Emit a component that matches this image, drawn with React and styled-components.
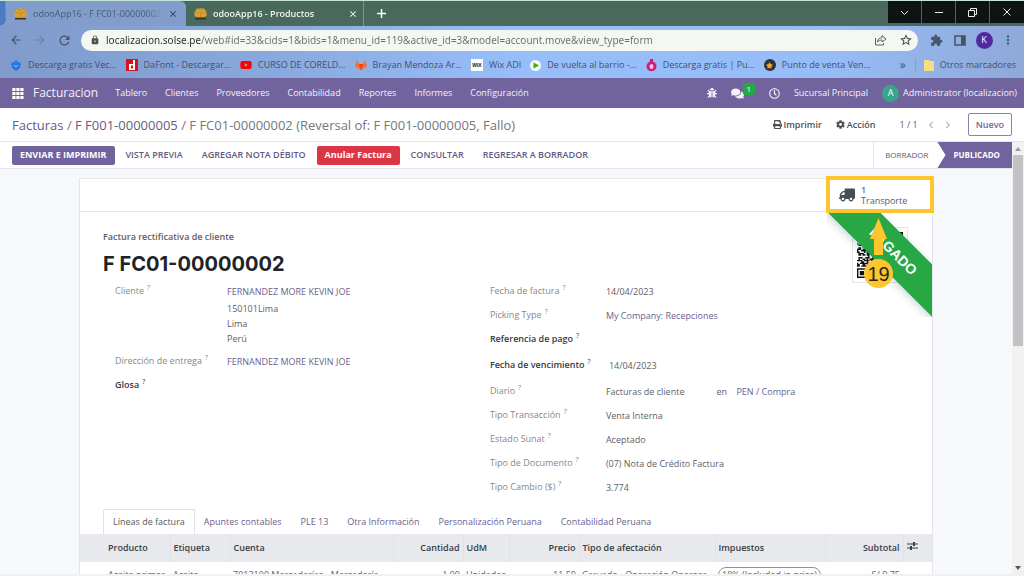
import React, { useState } from "react";
import styled, { createGlobalStyle, css } from "styled-components";
import {
  FaBug,
  FaChevronLeft,
  FaChevronRight,
  FaCog,
  FaComments,
  FaPrint,
  FaRegClock,
  FaStar,
  FaTruck,
  FaYoutube,
} from "react-icons/fa";
import {
  MdArrowBack,
  MdArrowForward,
  MdClose,
  MdExtension,
  MdLock,
  MdMoreVert,
  MdRefresh,
  MdStarBorder,
} from "react-icons/md";

const purple = "#71639e";
const yellow = "#fdc62f";

const GlobalStyle = createGlobalStyle`
  * {
    box-sizing: border-box;
  }
  body {
    margin: 0;
    font-family: "Open Sans", "Noto Sans", sans-serif;
    font-size: 9px;
    line-height: 14px;
    color: #5d6166;
    background: #fff;
  }
  button, input {
    font: inherit;
    color: inherit;
    margin: 0;
    padding: 0;
    border: 0;
    background: none;
  }
  a {
    color: inherit;
    text-decoration: none;
  }
  svg {
    display: block;
    flex: none;
  }
`;

const Page = styled.div`
  height: 100vh;
  display: flex;
  flex-direction: column;
  overflow: hidden;
  border-top: 1px solid #c5e5d6;
`;

/* browser window */

const Chrome = styled.header`
  flex: none;
  background: linear-gradient(90deg, #809bcb 0%, #88a7dc 25%, #97befa 50%, #97bdf8 80%, #8fa9d8 100%);
`;

const TabStrip = styled.div`
  height: 25px;
  display: flex;
  background: #48695b;
`;

const WindowTab = styled.div`
  width: ${(p) => (p.$active ? 186 : 178)}px;
  display: flex;
  align-items: center;
  gap: 6px;
  padding: 0 8px 0 14px;
  color: #4a5876;
  ${(p) =>
    p.$active
      ? css`
          background: radial-gradient(circle at 0 19px, #4c7bc4 5px, transparent 6px) 0 0 / 6px 25px no-repeat,
            linear-gradient(90deg, #4c7bc4 5px, #829ccb 6px) 0 0 / 100% 19px no-repeat, #829ccb;
          border-radius: 0 6px 0 0;
        `
      : css`
          padding: 0 5px 0 8px;
          border-right: 1px solid #7d968a;
          color: #f2f6f4;
        `}
`;

const TabTitle = styled.span`
  flex: 1;
  min-width: 0;
  overflow: hidden;
  white-space: nowrap;
  font-weight: ${(p) => (p.$active ? 400 : 600)};
  mask-image: linear-gradient(90deg, #000 88%, transparent);
`;

const IconButton = styled.button`
  display: flex;
  align-items: center;
  justify-content: center;
  width: ${(p) => p.$w || 24}px;
  color: ${(p) => p.$color || "#4a566b"};
`;

const WindowControls = styled.div`
  margin-left: auto;
  height: 22px;
  display: flex;
  gap: 1px;
  button {
    width: 33px;
    background: #0d1413;
    color: #e8eeee;
  }
  button:last-child {
    width: 34px;
  }
`;

const Toolbar = styled.div`
  height: 28px;
  display: flex;
  align-items: center;
  padding: 0 4px 0 4px;
`;

const AddressBar = styled.label`
  flex: 1;
  height: 21px;
  display: flex;
  align-items: center;
  gap: 6px;
  margin: 0 6px 0 5px;
  padding: 0 4px 0 9px;
  border-radius: 11px;
  background: #f4f7f2;
  color: #4c524f;
`;

const Address = styled.input`
  flex: 1;
  min-width: 0;
  font-family: "Noto Sans", sans-serif;
  font-size: 10px;
  outline: none;
  color: #666c6b;
  background: linear-gradient(90deg, #252b2b 94px, #6a706f 94px);
  background-clip: text;
  -webkit-text-fill-color: transparent;
`;

const Avatar = styled.span`
  width: ${(p) => p.$size}px;
  height: ${(p) => p.$size}px;
  display: flex;
  align-items: center;
  justify-content: center;
  border-radius: 50%;
  background: ${(p) => p.$bg};
  color: #fff;
`;

const Bookmarks = styled.nav`
  height: 24px;
  display: flex;
  align-items: center;
  gap: 9px;
  padding: 0 8px 2px 10px;
  color: #44506b;
  white-space: nowrap;
`;

const Bookmark = styled.a`
  display: flex;
  align-items: center;
  gap: 6px;
`;

const MoreBookmarks = styled.button`
  margin-left: auto;
  font-size: 12px;
`;

const OtherBookmarks = styled(Bookmark)`
  padding-left: 8px;
  border-left: 1px solid #83a3d3;
`;

/* application */

const NavBar = styled.nav`
  flex: none;
  height: 30px;
  display: flex;
  align-items: center;
  padding: 0 7px 0 12px;
  background: ${purple};
  color: #f4f2f9;
  white-space: nowrap;
`;

const Brand = styled.a`
  margin: 0 17px 0 9px;
  font-size: 12px;
`;

const Menu = styled.div`
  display: flex;
  gap: 18px;
`;

const Systray = styled.div`
  margin-left: auto;
  display: flex;
  align-items: center;
  gap: 14px;
`;

const Messages = styled.button`
  position: relative;
  width: 24px;
`;

const Count = styled.span`
  position: absolute;
  top: -4px;
  right: 0;
  width: 12px;
  height: 12px;
  border-radius: 2px;
  background: #28a745;
  color: #fff;
  font-size: 8px;
  line-height: 12px;
  text-align: center;
`;

const User = styled.button`
  display: flex;
  align-items: center;
  gap: 4px;
`;

const ControlPanel = styled.div`
  flex: none;
  height: 34px;
  display: flex;
  align-items: center;
  padding: 0 12px;
  border-bottom: 1px solid #e3e5e8;
  white-space: nowrap;
`;

const Breadcrumb = styled.div`
  flex: 1;
  font-size: 13px;
  color: #71777d;
  a {
    color: #655b80;
  }
`;

const PanelButton = styled.button`
  display: flex;
  align-items: center;
  gap: 2px;
  margin-right: 14px;
  font-weight: 600;
  color: #4b5157;
`;

const Pager = styled.div`
  display: flex;
  align-items: center;
  margin: 0 16px 0 10px;
  gap: 9px;
  button {
    color: #b5b8bc;
  }
`;

const NewButton = styled.button`
  height: 23px;
  padding: 0 7px;
  border: 1px solid #8b80ae;
  border-radius: 2px;
  font-weight: 600;
  color: ${purple};
`;

const Scroller = styled.div`
  flex: 1;
  min-height: 0;
  display: flex;
  border-bottom: 2px solid #f0f1f3;
`;

const Main = styled.main`
  flex: 1;
  min-width: 0;
  overflow: hidden;
  background: #f7f8fb;
`;

const ScrollBar = styled.div`
  width: 12px;
  display: flex;
  flex-direction: column;
  align-items: center;
  background: #f1f1f2;
`;

const ScrollArrow = styled.button`
  height: 13px;
  width: 12px;
  display: flex;
  align-items: center;
  justify-content: center;
`;

const ScrollTrack = styled.div`
  flex: 1;
  width: 10px;
`;

const ScrollThumb = styled.div`
  height: 47%;
  background: #c2c2c4;
`;

const StatusBar = styled.div`
  height: 27px;
  display: flex;
  align-items: center;
  gap: 3px;
  padding-left: 12px;
  border-bottom: 1px solid #e3e5e8;
  background: #fff;
  white-space: nowrap;
`;

const variants = {
  primary: css`
    background: ${purple};
    color: #fff;
    font-weight: 700;
  `,
  danger: css`
    background: #dc3545;
    color: #fff;
    font-weight: 700;
  `,
  link: css`
    color: #645a85;
    font-weight: 600;
  `,
};

const ActionButton = styled.button`
  height: 19px;
  padding: 0 8px;
  border-radius: 2px;
  ${(p) => variants[p.$variant || "link"]}
`;

const Stages = styled.div`
  margin-left: auto;
  align-self: stretch;
  display: flex;
  font-size: 8px;
`;

const Stage = styled.button`
  padding: 0 9px 0 11px;
  border-left: 1px solid #e3e5e8;
  ${(p) =>
    p.$current &&
    css`
      padding: 0 12px 0 16px;
      border: 0;
      font-weight: 700;
      color: #fff;
      background: ${purple};
      clip-path: polygon(0 0, 100% 0, 100% 100%, 0 100%, 8px 50%);
    `}
`;

const Sheet = styled.section`
  position: relative;
  margin: 9px 79px 0;
  border: 1px solid #e4e6e9;
  background: #fff;
`;

const ButtonBox = styled.div`
  height: 33px;
  display: flex;
  justify-content: flex-end;
  border-bottom: 1px solid #e4e6e9;
`;

const StatButton = styled.button`
  width: 98px;
  display: flex;
  align-items: center;
  gap: 6px;
  padding: 0 0 0 5px;
  text-align: left;
  line-height: 11px;
  color: #565c62;
  b {
    display: block;
    font-weight: 600;
    color: ${purple};
  }
  svg {
    transform: scaleX(-1);
    color: #454e57;
  }
`;

const Highlight = styled.div`
  position: absolute;
  z-index: 3;
  top: -3px;
  right: -2px;
  width: 108px;
  height: 37px;
  border: 4px solid ${yellow};
`;

const Pointer = styled.div`
  position: absolute;
  z-index: 3;
  top: 39px;
  right: 39px;
  display: flex;
  flex-direction: column;
  align-items: center;
`;

const Step = styled.span`
  width: 29px;
  height: 29px;
  margin-top: 4px;
  border-radius: 50%;
  background: ${yellow};
  color: #2c2716;
  font: 20px/30px "Liberation Sans", sans-serif;
  text-align: center;
`;

const QrFrame = styled.div`
  position: absolute;
  top: 48px;
  right: 24px;
  padding: 4px;
  border: 1px solid #e4e6e9;
  background: #fff;
`;

const RibbonCorner = styled.div`
  position: absolute;
  z-index: 2;
  top: 33px;
  right: 0;
  width: 105px;
  height: 105px;
  overflow: hidden;
`;

const Ribbon = styled.span`
  position: absolute;
  top: 21px;
  left: -14px;
  width: 160px;
  transform: rotate(45deg);
  background: #28a745;
  box-shadow: 0 3px 8px rgba(0, 0, 0, 0.15);
  color: #fff;
  font: bold 14px/37px "Liberation Sans", sans-serif;
  text-align: center;
`;

const Heading = styled.div`
  padding: 18px 23px 0;
  font-weight: 600;
  h1 {
    margin: 8px 0 0;
    font: bold 20px/24px Inter, sans-serif;
    color: #1f2428;
  }
`;

const Groups = styled.div`
  display: grid;
  grid-template-columns: 48fr 52fr;
  padding: 4px 36px 0 35px;
`;

const Field = styled.div`
  display: flex;
  min-height: ${(p) => (p.$tall ? 28 : 24)}px;
  padding: ${(p) => (p.$tall ? 6 : 4)}px 0;
`;

const FieldLabel = styled.span`
  width: ${(p) => (p.$wide ? 116 : 112)}px;
  flex: none;
  white-space: nowrap;
  color: ${(p) => (p.$strong ? "#373c41" : "#85898e")};
  font-weight: ${(p) => (p.$strong ? 600 : 400)};
  sup {
    margin-left: 3px;
    font-size: 7px;
    font-weight: 400;
    line-height: 0;
  }
`;

const FieldValue = styled.div`
  line-height: 15px;
  padding-left: ${(p) => (p.$inset ? 3 : 0)}px;
  a {
    color: #6a628c;
  }
`;

const Currency = styled.span`
  margin-left: 32px;
  a {
    margin-left: 7px;
  }
`;

const PartnerAddress = styled.address`
  margin-top: 2px;
  font-style: normal;
`;

const Tabs = styled.div`
  display: flex;
  margin-top: 9px;
  padding-left: 23px;
`;

const Tab = styled.button`
  height: 25px;
  padding: 0 9px;
  border: 1px solid transparent;
  border-width: 1px 1px 0 0;
  color: #6a628c;
  ${(p) =>
    p.$active &&
    css`
      border-color: #dfe2e5;
      border-left-width: 1px;
      border-radius: 2px 2px 0 0;
      color: #55595e;
    `}
`;

const Lines = styled.table`
  width: 100%;
  table-layout: fixed;
  border-collapse: collapse;
  text-align: left;
  white-space: nowrap;
  th {
    height: 28px;
    padding: 0 3px;
    border-right: 1px solid #dfe2e6;
    background: #e7e9ed;
    color: #383e45;
    font-weight: 600;
  }
  th:first-child,
  td:first-child {
    padding-left: 28px;
  }
  th:last-child {
    border-right: 0;
  }
  td {
    height: 26px;
    padding: 0 3px;
  }
  .number {
    text-align: right;
  }
`;

const Tax = styled.span`
  display: inline-block;
  padding: 0 3px;
  border: 1px solid #8d9196;
  border-radius: 8px;
`;

const CubeIcon = () => (
  <svg width="13" height="13" viewBox="0 0 13 13">
    <path d="M.5 5 3 1.500h7L12.500 5v4l-2 1h-8l-2-1z" fill="#dba032" />
    <path d="M1 5l5.500 1.500L12 5M6.500 6.500V10M3 1.500 6.500 4 10 1.500" stroke="#a8781f" strokeWidth=".5" fill="none" />
    <path d="M1 11h11v1.500H1z" fill="#35352d" />
  </svg>
);

const ShareIcon = () => (
  <svg width="13" height="12" viewBox="0 0 13 12" fill="none" stroke="#59605f">
    <path d="M1.500 4v7h8V9" />
    <path d="M3.500 8c.3-3 2-4.300 4.500-4.300V1.500L12 5 8 8V6C6 6 4.700 6.600 3.500 8z" strokeLinejoin="round" />
  </svg>
);

const PanelIcon = () => (
  <svg width="12" height="11" viewBox="0 0 12 11">
    <path d="M1 1h10v9H1z" fill="none" stroke="#45545f" strokeWidth="1.500" />
    <path d="M7 1h4v9H7z" fill="#45545f" />
  </svg>
);

const AppsIcon = () => (
  <svg width="12" height="11" viewBox="0 0 12 11" fill="#fff">
    {[0, 4, 8].map((y) => [0, 4, 8].map((x) => <rect key={`${x}-${y}`} x={x + 0.3} y={y} width="3.200" height="3" />))}
  </svg>
);

const SlidersIcon = () => (
  <svg width="11" height="10" viewBox="0 0 11 10" fill="none" stroke="#383e45">
    <path d="M0 3h11M0 7h11" />
    <path d="M7 1v4M4 5v4" strokeWidth="2" />
  </svg>
);

const bookmarkIcons = {
  vector: (
    <svg width="12" height="12" viewBox="0 0 12 12">
      <path d="M1 4l3-1 2-2 2 2 3 1-1 5-4 3-4-3z" fill="#2477e8" />
      <path d="M4 6l2 2 2-2" stroke="#9cc3fb" fill="none" />
    </svg>
  ),
  dafont: (
    <svg width="12" height="12" viewBox="0 0 12 12">
      <path d="M0 0h12v12H0z" fill="#d3141c" />
      <path d="M7 1h2v10H3V5h4zM5 6.500v3h2v-3z" fill="#fff" fillRule="evenodd" />
    </svg>
  ),
  youtube: <FaYoutube size={12} color="#f00" />,
  gitlab: (
    <svg width="12" height="12" viewBox="0 0 12 12">
      <path d="M0 7 2 1l2 4h4l2-4 2 6-6 4.500z" fill="#fc6d26" />
      <path d="M4 5h4l-2 6.500z" fill="#e24329" />
    </svg>
  ),
  play: (
    <svg width="11" height="11" viewBox="0 0 11 11">
      <circle cx="5.500" cy="5.500" r="5.500" fill="#f3fbf0" />
      <path d="M3.500 2.500 9 5.500l-5.500 3z" fill="#3fa81b" />
    </svg>
  ),
  drop: (
    <svg width="11" height="13" viewBox="0 0 11 13">
      <path d="M4 0h3v2.500a5 5 0 1 1-3 0z" fill="#cc1f78" />
      <ellipse cx="5.500" cy="7.500" rx="2" ry="2.500" fill="#f7c9df" />
    </svg>
  ),
};

const WixIcon = styled.span`
  width: 12px;
  height: 12px;
  background: #fff;
  color: #111;
  font: bold 5px/12px "Liberation Sans", sans-serif;
  text-align: center;
`;

const bookmarks = [
  [bookmarkIcons.vector, "Descarga gratis Vec..."],
  [bookmarkIcons.dafont, "DaFont - Descargar..."],
  [bookmarkIcons.youtube, "CURSO DE CORELD..."],
  [bookmarkIcons.gitlab, "Brayan Mendoza Ar..."],
  [<WixIcon>WIX</WixIcon>, "Wix ADI"],
  [bookmarkIcons.play, "De vuelta al barrio -..."],
  [bookmarkIcons.drop, "Descarga gratis | Pu..."],
  [
    <Avatar $size={12} $bg="#2d3338">
      <FaStar size={7} color="#f4a736" />
    </Avatar>,
    "Punto de venta Ven...",
  ],
];

const menus = ["Tablero", "Clientes", "Proveedores", "Contabilidad", "Reportes", "Informes", "Configuración"];

const fields = [
  { label: "Fecha de factura", value: "14/04/2023" },
  { label: "Picking Type", value: <a href="#picking">My Company: Recepciones</a> },
  { label: "Referencia de pago", strong: true },
  { label: "Fecha de vencimiento", value: "14/04/2023", strong: true, tall: true },
  {
    label: "Diario",
    value: (
      <>
        Facturas de cliente
        <Currency>
          en <a href="#currency">PEN / Compra</a>
        </Currency>
      </>
    ),
  },
  { label: "Tipo Transacción", value: "Venta Interna" },
  { label: "Estado Sunat", value: "Aceptado" },
  { label: "Tipo de Documento", value: "(07) Nota de Crédito Factura" },
  { label: "Tipo Cambio ($)", value: "3.774" },
];

const tabs = [
  "Líneas de factura",
  "Apuntes contables",
  "PLE 13",
  "Otra Información",
  "Personalización Peruana",
  "Contabilidad Peruana",
];

const QR_SIZE = 33;

// true for the three 7x7 finder squares and a fixed scatter elsewhere
function isDark(x, y) {
  const far = QR_SIZE - 7;
  const fx = x >= far - 1 ? x - far : x;
  const fy = y >= far - 1 ? y - far : y;
  if (fx < 8 && fy < 8 && !(x >= far - 1 && y >= far - 1)) {
    if (fx < 0 || fy < 0 || fx > 6 || fy > 6) return false;
    return Math.max(Math.abs(fx - 3), Math.abs(fy - 3)) !== 2;
  }
  const n = Math.sin(x * 12.9898 + y * 78.233) * 43758.5453;
  return n - Math.floor(n) < 0.55;
}

const QrCode = () => {
  let d = "";
  for (let y = 0; y < QR_SIZE; y++) {
    for (let x = 0; x < QR_SIZE; x++) {
      if (isDark(x, y)) d += `M${x} ${y}h1v1h-1z`;
    }
  }
  return (
    <svg width="46" height="46" viewBox={`0 0 ${QR_SIZE} ${QR_SIZE}`}>
      <path d={d} fill="#111" />
    </svg>
  );
};

const Label = ({ children, ...props }) => (
  <FieldLabel {...props}>
    {children}
    <sup>?</sup>
  </FieldLabel>
);

const BrowserWindow = () => (
  <Chrome>
    <TabStrip>
      <WindowTab $active>
        <CubeIcon />
        <TabTitle $active>odooApp16 - F FC01-00000002 (</TabTitle>
        <IconButton $w={10} $color="#2f3b52" aria-label="Cerrar">
          <MdClose size={10} />
        </IconButton>
      </WindowTab>
      <WindowTab>
        <CubeIcon />
        <TabTitle>odooApp16 - Productos</TabTitle>
        <IconButton $w={10} $color="#fff" aria-label="Cerrar">
          <MdClose size={10} />
        </IconButton>
      </WindowTab>
      <IconButton $w={34} $color="#fff" aria-label="Nueva pestaña">
        <svg width="9" height="9" stroke="#fff">
          <path d="M4.500 0v9M0 4.500h9" strokeWidth="1.500" />
        </svg>
      </IconButton>
      <WindowControls>
        <IconButton aria-label="Buscar pestañas">
          <svg width="9" height="9" fill="none" stroke="currentColor">
            <path d="M1 3l3.500 3.500L8 3" />
          </svg>
        </IconButton>
        <IconButton aria-label="Minimizar">
          <svg width="8" height="8" stroke="currentColor">
            <path d="M0 4.500h8" />
          </svg>
        </IconButton>
        <IconButton aria-label="Restaurar">
          <svg width="9" height="9" fill="none" stroke="currentColor">
            <path d="M.5 2.500h6v6h-6zM2.500 2.500v-2h6v6h-2" />
          </svg>
        </IconButton>
        <IconButton aria-label="Cerrar ventana">
          <svg width="8" height="8" stroke="currentColor">
            <path d="M.5.5l7 7M7.500.5l-7 7" />
          </svg>
        </IconButton>
      </WindowControls>
    </TabStrip>
    <Toolbar>
      <IconButton aria-label="Atrás">
        <MdArrowBack size={14} />
      </IconButton>
      <IconButton $color="#6c84ae" aria-label="Adelante">
        <MdArrowForward size={14} />
      </IconButton>
      <IconButton aria-label="Recargar">
        <MdRefresh size={15} />
      </IconButton>
      <AddressBar>
        <MdLock size={10} />
        <Address
          aria-label="Dirección"
          defaultValue="localizacion.solse.pe/web#id=33&cids=1&bids=1&menu_id=119&active_id=3&model=account.move&view_type=form"
        />
        <IconButton aria-label="Compartir">
          <ShareIcon />
        </IconButton>
        <IconButton $w={16} $color="#3f4645" aria-label="Favorito">
          <MdStarBorder size={14} />
        </IconButton>
      </AddressBar>
      <IconButton aria-label="Extensiones">
        <MdExtension size={13} />
      </IconButton>
      <IconButton aria-label="Panel lateral">
        <PanelIcon />
      </IconButton>
      <IconButton aria-label="Perfil">
        <Avatar $size={17} $bg="#5228a5">
          K
        </Avatar>
      </IconButton>
      <IconButton aria-label="Menú">
        <MdMoreVert size={14} />
      </IconButton>
    </Toolbar>
    <Bookmarks>
      {bookmarks.map(([icon, name]) => (
        <Bookmark key={name} href="#bookmark">
          {icon}
          {name}
        </Bookmark>
      ))}
      <MoreBookmarks>»</MoreBookmarks>
      <OtherBookmarks href="#others">
        <svg width="10" height="12">
          <path d="M0 1h5l1 1h4v10H0z" fill="#f7dd85" />
        </svg>
        Otros marcadores
      </OtherBookmarks>
    </Bookmarks>
  </Chrome>
);

const App = () => {
  const [tab, setTab] = useState(tabs[0]);
  return (
    <Page>
      <GlobalStyle />
      <BrowserWindow />
      <NavBar>
        <AppsIcon />
        <Brand href="#home">Facturacion</Brand>
        <Menu>
          {menus.map((name) => (
            <a key={name} href="#menu">
              {name}
            </a>
          ))}
        </Menu>
        <Systray>
          <FaBug size={10} />
          <Messages aria-label="Conversaciones">
            <FaComments size={13} />
            <Count>1</Count>
          </Messages>
          <FaRegClock size={11} />
          <button>Sucursal Principal</button>
          <User>
            <Avatar $size={17} $bg="#3ba58c">
              A
            </Avatar>
            Administrator (localizacion)
          </User>
        </Systray>
      </NavBar>
      <ControlPanel>
        <Breadcrumb>
          <a href="#list">Facturas</a> / <a href="#origin">F F001-00000005</a> / F FC01-00000002 (Reversal of: F
          F001-00000005, Fallo)
        </Breadcrumb>
        <PanelButton>
          <FaPrint size={9} /> Imprimir
        </PanelButton>
        <PanelButton>
          <FaCog size={9} /> Acción
        </PanelButton>
        <Pager>
          1 / 1
          <button aria-label="Anterior">
            <FaChevronLeft size={8} />
          </button>
          <button aria-label="Siguiente">
            <FaChevronRight size={8} />
          </button>
        </Pager>
        <NewButton>Nuevo</NewButton>
      </ControlPanel>
      <Scroller>
        <Main>
          <StatusBar>
            <ActionButton $variant="primary">ENVIAR E IMPRIMIR</ActionButton>
            <ActionButton>VISTA PREVIA</ActionButton>
            <ActionButton>AGREGAR NOTA DÉBITO</ActionButton>
            <ActionButton $variant="danger">Anular Factura</ActionButton>
            <ActionButton>CONSULTAR</ActionButton>
            <ActionButton>REGRESAR A BORRADOR</ActionButton>
            <Stages>
              <Stage>BORRADOR</Stage>
              <Stage $current>PUBLICADO</Stage>
            </Stages>
          </StatusBar>
          <Sheet>
            <ButtonBox>
              <StatButton>
                <FaTruck size={16} />
                <span>
                  <b>1</b>Transporte
                </span>
              </StatButton>
            </ButtonBox>
            <Highlight />
            <QrFrame>
              <QrCode />
            </QrFrame>
            <RibbonCorner>
              <Ribbon>PAGADO</Ribbon>
            </RibbonCorner>
            <Pointer>
              <svg width="17" height="37" viewBox="0 0 17 37" fill={yellow}>
                <path d="M8.500 0 17 21h-4v16H4V21H0z" />
              </svg>
              <Step>19</Step>
            </Pointer>
            <Heading>
              Factura rectificativa de cliente
              <h1>F FC01-00000002</h1>
            </Heading>
            <Groups>
              <div>
                <Field>
                  <Label>Cliente</Label>
                  <FieldValue>
                    <a href="#partner">FERNANDEZ MORE KEVIN JOE</a>
                    <PartnerAddress>
                      150101Lima
                      <br />
                      Lima
                      <br />
                      Perú
                    </PartnerAddress>
                  </FieldValue>
                </Field>
                <Field>
                  <Label>Dirección de entrega</Label>
                  <FieldValue>
                    <a href="#shipping">FERNANDEZ MORE KEVIN JOE</a>
                  </FieldValue>
                </Field>
                <Field>
                  <Label $strong>Glosa</Label>
                </Field>
              </div>
              <div>
                {fields.map(({ label, value, strong, tall }) => (
                  <Field key={label} $tall={tall}>
                    <Label $wide $strong={strong}>
                      {label}
                    </Label>
                    <FieldValue $inset={tall}>{value}</FieldValue>
                  </Field>
                ))}
              </div>
            </Groups>
            <Tabs role="tablist">
              {tabs.map((name) => (
                <Tab key={name} role="tab" aria-selected={name === tab} $active={name === tab} onClick={() => setTab(name)}>
                  {name}
                </Tab>
              ))}
            </Tabs>
            <Lines>
              <colgroup>
                <col width="90" />
                <col width="60" />
                <col />
                <col width="70" />
                <col width="46" />
                <col width="70" />
                <col width="136" />
                <col width="110" />
                <col width="78" />
                <col width="29" />
              </colgroup>
              <thead>
                <tr>
                  <th>Producto</th>
                  <th>Etiqueta</th>
                  <th>Cuenta</th>
                  <th className="number">Cantidad</th>
                  <th>UdM</th>
                  <th className="number">Precio</th>
                  <th>Tipo de afectación</th>
                  <th>Impuestos</th>
                  <th className="number">Subtotal</th>
                  <th>
                    <button aria-label="Columnas">
                      <SlidersIcon />
                    </button>
                  </th>
                </tr>
              </thead>
              <tbody>
                <tr>
                  <td>Aceite primor</td>
                  <td>Aceite</td>
                  <td>7012100 Mercaderías - Mercadería</td>
                  <td className="number">1.00</td>
                  <td>Unidades</td>
                  <td className="number">11.50</td>
                  <td>Gravado - Operación Onerosa</td>
                  <td>
                    <Tax>18% (Included in price)</Tax>
                  </td>
                  <td className="number">S/ 9.75</td>
                  <td />
                </tr>
              </tbody>
            </Lines>
          </Sheet>
        </Main>
        <ScrollBar>
          <ScrollArrow aria-label="Subir">
            <svg width="6" height="4">
              <path d="M0 4l3-4 3 4z" fill="#9a9a9a" />
            </svg>
          </ScrollArrow>
          <ScrollTrack>
            <ScrollThumb />
          </ScrollTrack>
          <ScrollArrow aria-label="Bajar">
            <svg width="6" height="4">
              <path d="M0 0h6L3 4z" fill="#555" />
            </svg>
          </ScrollArrow>
        </ScrollBar>
      </Scroller>
    </Page>
  );
};

export default App;
